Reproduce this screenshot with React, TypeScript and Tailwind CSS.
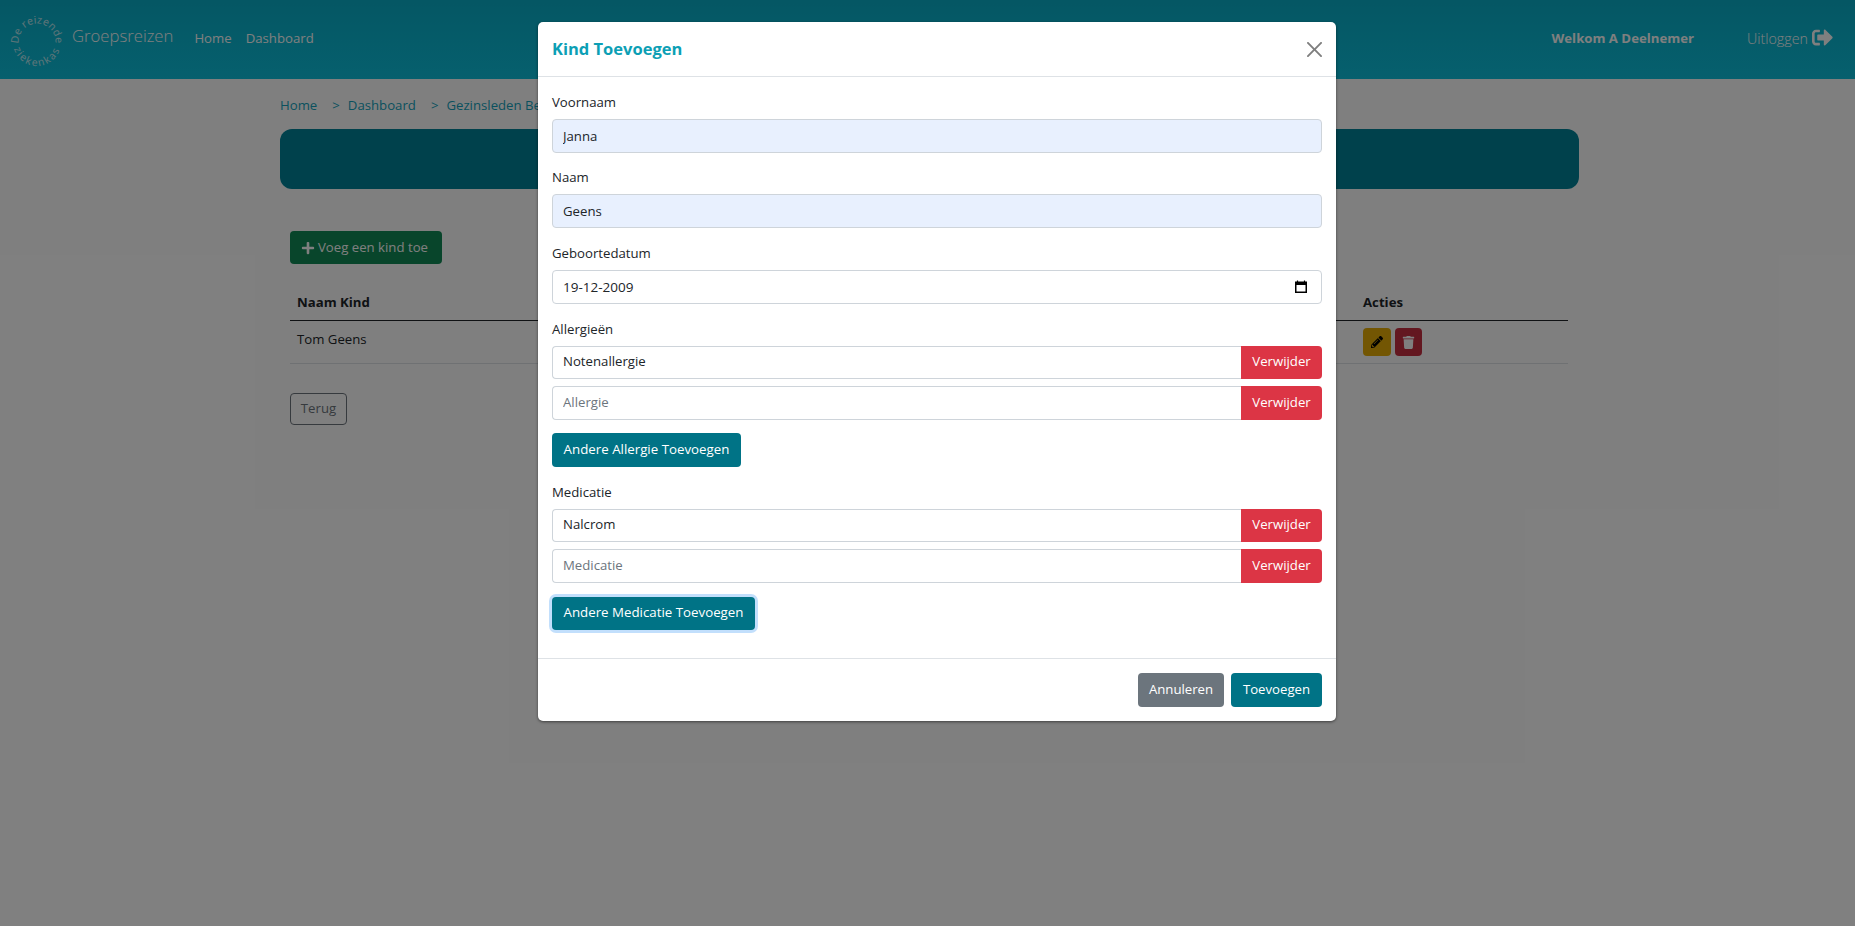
import React from 'react';
import { FaPlus, FaPencilAlt, FaTrash, FaSignOutAlt } from 'react-icons/fa';

const font = "font-['Open_Sans','Noto_Sans',sans-serif]";

const Logo = () => (
  <svg width="58" height="58" viewBox="0 0 58 58" className="shrink-0">
    <defs>
      <path id="arc-top" d="M10.5 31 A18.5 18.5 0 1 1 47.5 31" fill="none" />
      <path id="arc-bottom" d="M5 31 A24 24 0 0 0 53 31" fill="none" />
    </defs>
    <text fontSize="10.5" fill="#fff" opacity="0.75" textAnchor="middle" letterSpacing="0.2">
      <textPath href="#arc-top" startOffset="50%">De reizende</textPath>
    </text>
    <text fontSize="10.5" fill="#fff" opacity="0.75" textAnchor="middle" letterSpacing="1.5">
      <textPath href="#arc-bottom" startOffset="50%">ziekenkas</textPath>
    </text>
  </svg>
);

const Field = ({ label, value, filled, className }: { label: string; value: string; filled?: boolean; className: string }) => (
  <div className={className}>
    <label className="block h-[21px] mb-[6px] text-[13.2px] leading-[21px] text-[#212529]">{label}</label>
    <input
      readOnly
      value={value}
      className={`w-full h-[33.5px] px-[10px] rounded-[4px] border border-[#ced4da] text-[13.2px] text-[#212529] outline-none ${filled ? 'bg-[#e8f0fe]' : 'bg-white'}`}
    />
  </div>
);

const RemoveRow = ({ value, placeholder }: { value: string; placeholder: string }) => (
  <div className="flex h-[33.5px] mb-[7px]">
    <input
      readOnly
      value={value}
      placeholder={placeholder}
      className="flex-1 min-w-0 px-[10px] rounded-l-[4px] border border-r-0 border-[#ced4da] text-[13.2px] text-[#212529] placeholder:text-[#6c757d] outline-none"
    />
    <button className="w-[81px] rounded-r-[4px] bg-[#dc3545] text-white text-[13.2px]">Verwijder</button>
  </div>
);

const App = () => {
  return (
    <div className={`relative h-[926px] overflow-hidden bg-white text-[13.2px] text-[#212529] ${font}`}>
      <header className="flex items-center h-[79px] bg-gradient-to-b from-[#0aaec8] to-[#0cc0dc] text-white">
        <div className="ml-[8px]">
          <Logo />
        </div>
        <span className="ml-[6px] mt-[-8px] text-[16.7px] font-light">Groepsreizen</span>
        <nav className="flex gap-[14px] ml-[21px] mt-[-1px]">
          <span>Home</span>
          <span>Dashboard</span>
        </nav>
        <div className="flex items-center ml-auto mr-[22px] mt-[-1px]">
          <span className="mr-[53px] font-bold">Welkom A Deelnemer</span>
          <span className="text-[14.3px] font-light">Uitloggen</span>
          <FaSignOutAlt className="ml-[4px] mb-[3px] text-[21px]" />
        </div>
      </header>

      <main className="w-[1299px] ml-[280px]">
        <div className="flex h-[21px] mt-[16px] leading-[21px] text-[#14a3bd]">
          <span>Home</span>
          <span className="ml-[15px] mr-[8px]">&gt;</span>
          <span>Dashboard</span>
          <span className="ml-[15px] mr-[8px]">&gt;</span>
          <span>Gezinsleden Beheren</span>
        </div>
        <div className="h-[60px] mt-[13px] rounded-[12px] bg-[#008299]" />

        <div className="pl-[10px] pr-[11px] pt-[42px]">
          <button className="flex items-center w-[152px] h-[33px] pl-[11px] rounded-[4px] bg-[#118a56] text-white">
            <FaPlus className="mr-[3px] text-[14px]" />
            Voeg een kind toe
          </button>

          <table className="w-full mt-[20px]">
            <thead>
              <tr className="h-[36px] border-b border-[#212529]">
                <th className="px-[7px] pt-[3px] text-left font-bold">Naam Kind</th>
                <th />
                <th className="w-[212px] px-[7px] pt-[3px] text-left font-bold">Acties</th>
              </tr>
            </thead>
            <tbody>
              <tr className="h-[43px] border-b border-[#dee2e6]">
                <td className="px-[7px] pb-[4px]">Tom Geens</td>
                <td />
                <td className="px-[7px] pt-[1px]">
                  <div className="flex gap-[4px]">
                    <span className="flex items-center justify-center w-[28px] h-[28px] rounded-[4px] bg-[#e6ad06] text-black">
                      <FaPencilAlt className="text-[12px]" />
                    </span>
                    <span className="flex items-center justify-center w-[27px] h-[28px] rounded-[4px] bg-[#c72f40] text-white">
                      <FaTrash className="text-[13px]" />
                    </span>
                  </div>
                </td>
              </tr>
            </tbody>
          </table>

          <button className="h-[32.5px] w-[57px] mt-[29px] rounded-[4px] border border-[#6c757d] text-[#6c757d]">
            Terug
          </button>
        </div>
      </main>

      {/* backdrop + dialog */}
      <div className="absolute inset-0 bg-black/50" />
      <div className="absolute left-[538px] top-[22px] w-[798px] h-[699px] flex flex-col rounded-[5px] bg-white shadow-[0_1px_3px_rgba(0,0,0,0.5)]">
        <div className="flex items-center justify-between h-[55px] px-[14px] border-b border-[#dee2e6]">
          <h5 className="mt-[1px] text-[16.5px] font-bold text-[#0c9fb5]">Kind Toevoegen</h5>
          <svg width="15" height="15" viewBox="0 0 16 16" fill="#000" opacity="0.5">
            <path d="M.293.293a1 1 0 011.414 0L8 6.586 14.293.293a1 1 0 111.414 1.414L9.414 8l6.293 6.293a1 1 0 01-1.414 1.414L8 9.414l-6.293 6.293a1 1 0 01-1.414-1.414L6.586 8 .293 1.707a1 1 0 010-1.414z" />
          </svg>
        </div>

        <div className="flex-1 px-[14px] pt-[15px]">
          <Field label="Voornaam" value="Janna" filled className="mb-[14.5px]" />
          <Field label="Naam" value="Geens" filled className="mb-[15.5px]" />
          <div className="mb-[15px]">
            <label className="block h-[21px] mb-[6px] leading-[21px]">Geboortedatum</label>
            <div className="flex items-center h-[33.5px] pl-[10px] pr-[13px] rounded-[4px] border border-[#ced4da] text-[13.5px]">
              <span className="flex-1">19-12-2009</span>
              <svg width="14" height="14" viewBox="0 0 14 14" fill="none" stroke="#000">
                <path d="M3.5 0.5v2M10.5 0.5v2" strokeWidth="1.2" />
                <rect x="1.75" y="2.25" width="10.5" height="10" strokeWidth="1.5" />
                <path d="M1.5 4h11" strokeWidth="2" />
              </svg>
            </div>
          </div>

          <label className="block h-[21px] mb-[6px] leading-[21px]">Allergieën</label>
          <RemoveRow value="Notenallergie" placeholder="Allergie" />
          <RemoveRow value="" placeholder="Allergie" />
          <button className="block h-[34px] w-[189px] mt-[13px] mb-[15px] rounded-[4px] bg-[#007386] text-white text-[13.3px] font-medium">
            Andere Allergie Toevoegen
          </button>

          <label className="block h-[21px] mb-[6px] leading-[21px]">Medicatie</label>
          <RemoveRow value="Nalcrom" placeholder="Medicatie" />
          <RemoveRow value="" placeholder="Medicatie" />
          <button className="block h-[33.5px] w-[203px] mt-[14px] rounded-[4px] bg-[#007386] text-white text-[13.3px] font-medium shadow-[0_0_0_3px_#c2dffc]">
            Andere Medicatie Toevoegen
          </button>
        </div>

        <div className="flex items-center justify-end gap-[7px] h-[63px] px-[14px] border-t border-[#dee2e6]">
          <button className="h-[34px] w-[86px] rounded-[4px] bg-[#6c757d] text-white font-medium">Annuleren</button>
          <button className="h-[34px] w-[91px] rounded-[4px] bg-[#007386] text-white font-medium">Toevoegen</button>
        </div>
      </div>
    </div>
  );
};

export default App;
